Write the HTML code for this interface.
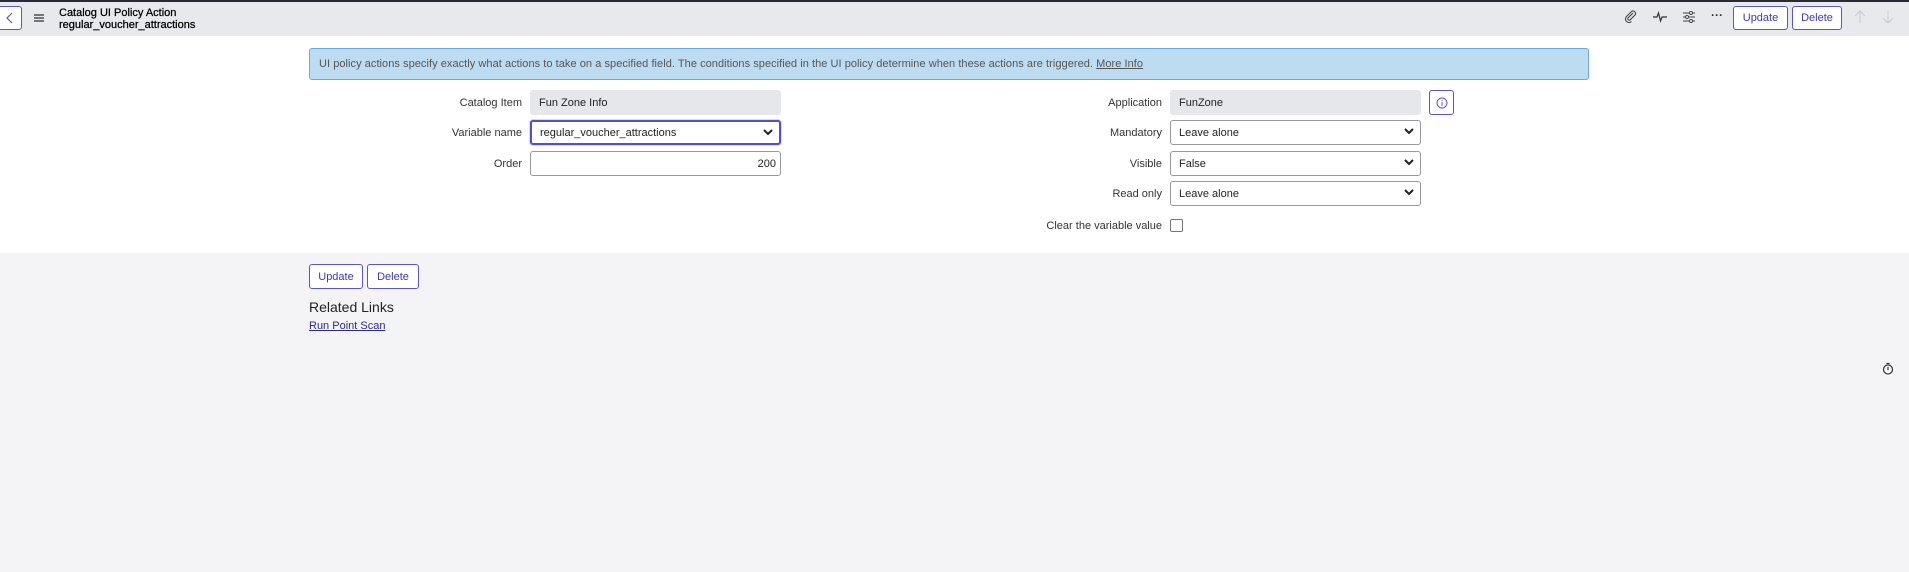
<!DOCTYPE html>
<html><head><style>
*{box-sizing:border-box;margin:0;padding:0}
body{width:1909px;height:572px;background:#f4f4f6;font-family:"Liberation Sans",sans-serif;color:#222;position:relative;overflow:hidden;font-size:11px}
.a{position:absolute}
.hdr{left:0;top:0;width:1909px;height:36px;background:#e8e9ed;border-top:2px solid #2a2a35}
.white{left:0;top:36px;width:1909px;height:217px;background:#fff}
.btn{position:absolute;border:1px solid #5a56c6;border-radius:3px;background:#fff;color:#3c3aa8;font-size:11px;display:flex;align-items:center;justify-content:center}
.lbl{position:absolute;text-align:right;font-size:11px;color:#333}
.inp{position:absolute;border:1px solid #999;border-radius:3px;background:#fff;font-size:11px;padding-left:8px;display:flex;align-items:center}
.ro{background:#e6e7ea;border-color:#e6e7ea}
.chev{position:absolute;right:6px;top:7px}
</style></head><body>
<div class="a hdr"></div>
<div class="btn" style="left:-2px;top:6px;width:24px;height:24px;border-radius:0 3px 3px 0"><svg width="10" height="12"><path d="M7 1L2 6l5 5" stroke="#5a56c6" fill="none" stroke-width="1.2"/></svg></div>
<svg class="a" style="left:34px;top:14px" width="10" height="8"><path d="M0 1h10M0 4h10M0 7h10" stroke="#333" stroke-width="1.2"/></svg>
<div class="a" style="left:59px;top:7px;font-size:11px;line-height:12px;color:#000;-webkit-text-stroke:0.25px #000">Catalog UI Policy Action<br>regular_voucher_attractions</div>
<svg class="a" style="left:1624px;top:10px" width="14" height="14"><path d="M9 3L4 8a1.5 1.5 0 0 0 2 2l5-5a2.5 2.5 0 0 0-3.5-3.5L2.5 6.5a3.5 3.5 0 0 0 5 5" stroke="#444" fill="none" stroke-width="1.1"/></svg>
<svg class="a" style="left:1653px;top:10px" width="14" height="14"><path d="M0 7h4l1.5-4 2 8 1.5-4h5" stroke="#333" fill="none" stroke-width="1.2"/></svg>
<svg class="a" style="left:1682px;top:10px" width="14" height="14"><path d="M1 3h12M1 7h12M1 11h12" stroke="#444" stroke-width="1"/><circle cx="9" cy="3" r="1.5" fill="#fff" stroke="#444"/><circle cx="5" cy="7" r="1.5" fill="#fff" stroke="#444"/><circle cx="9" cy="11" r="1.5" fill="#fff" stroke="#444"/></svg>
<div class="a" style="left:1711px;top:8px;font-size:12px;font-weight:bold;color:#333">···</div>
<div class="btn" style="left:1733px;top:6px;width:55px;height:24px">Update</div>
<div class="btn" style="left:1792px;top:6px;width:50px;height:24px">Delete</div>
<svg class="a" style="left:1854px;top:10px" width="12" height="14"><path d="M6 13V1M1 6l5-5 5 5" stroke="#c8c8d0" fill="none"/></svg>
<svg class="a" style="left:1882px;top:10px" width="12" height="14"><path d="M6 1v12M1 8l5 5 5-5" stroke="#c8c8d0" fill="none"/></svg>

<div class="a white"></div>
<div class="a" style="left:309px;top:48px;width:1280px;height:32px;background:#bddcf1;border:1px solid #6aa9dc;border-radius:3px;padding-left:9px;line-height:30px;color:#555;font-size:11px;letter-spacing:0.05px">UI policy actions specify exactly what actions to take on a specified field. The conditions specified in the UI policy determine when these actions are triggered. <u>More Info</u></div>

<div class="lbl" style="left:400px;width:122px;top:97px">Catalog Item</div>
<div class="inp ro" style="left:530px;top:90px;width:251px;height:25px">Fun Zone Info</div>
<div class="lbl" style="left:400px;width:122px;top:127px">Variable name</div>
<div class="inp" style="left:530px;top:120px;width:251px;height:25px;border:2px solid #4f52cf;box-shadow:0 0 0 1px #d7d8f2">regular_voucher_attractions<svg class="chev" width="10" height="8"><path d="M1 1l4 4 4-4" stroke="#222" fill="none" stroke-width="2"/></svg></div>
<div class="lbl" style="left:400px;width:122px;top:158px">Order</div>
<div class="inp" style="left:530px;top:151px;width:251px;height:25px;justify-content:flex-end;padding-right:4px">200</div>

<div class="lbl" style="left:1000px;width:162px;top:97px">Application</div>
<div class="inp ro" style="left:1170px;top:90px;width:251px;height:25px">FunZone</div>
<div class="btn" style="left:1429px;top:90px;width:25px;height:25px"><svg width="12" height="12"><circle cx="6" cy="6" r="5" stroke="#5a56c6" fill="none"/><path d="M6 5v4M6 3v1" stroke="#5a56c6"/></svg></div>
<div class="lbl" style="left:1000px;width:162px;top:127px">Mandatory</div>
<div class="inp" style="left:1170px;top:120px;width:251px;height:25px">Leave alone<svg class="chev" width="10" height="8"><path d="M1 1l4 4 4-4" stroke="#222" fill="none" stroke-width="2"/></svg></div>
<div class="lbl" style="left:1000px;width:162px;top:158px">Visible</div>
<div class="inp" style="left:1170px;top:151px;width:251px;height:25px">False<svg class="chev" width="10" height="8"><path d="M1 1l4 4 4-4" stroke="#222" fill="none" stroke-width="2"/></svg></div>
<div class="lbl" style="left:1000px;width:162px;top:188px">Read only</div>
<div class="inp" style="left:1170px;top:181px;width:251px;height:25px">Leave alone<svg class="chev" width="10" height="8"><path d="M1 1l4 4 4-4" stroke="#222" fill="none" stroke-width="2"/></svg></div>
<div class="lbl" style="left:1000px;width:162px;top:220px">Clear the variable value</div>
<div class="a" style="left:1170px;top:219px;width:13px;height:13px;border:1px solid #777;border-radius:2px;background:#fff"></div>

<div class="btn" style="left:309px;top:264px;width:54px;height:25px">Update</div>
<div class="btn" style="left:367px;top:264px;width:52px;height:25px">Delete</div>
<div class="a" style="left:309px;top:299px;font-size:14px;color:#222">Related Links</div>
<div class="a" style="left:309px;top:320px;font-size:11px;color:#2b2a8c;text-decoration:underline">Run Point Scan</div>
<svg class="a" style="left:1882px;top:362px" width="12" height="13"><circle cx="6" cy="7.5" r="4.5" stroke="#333" fill="none" stroke-width="1.2"/><path d="M6 5v3M4.5 1.5h3" stroke="#333" stroke-width="1.2"/></svg>
</body></html>
